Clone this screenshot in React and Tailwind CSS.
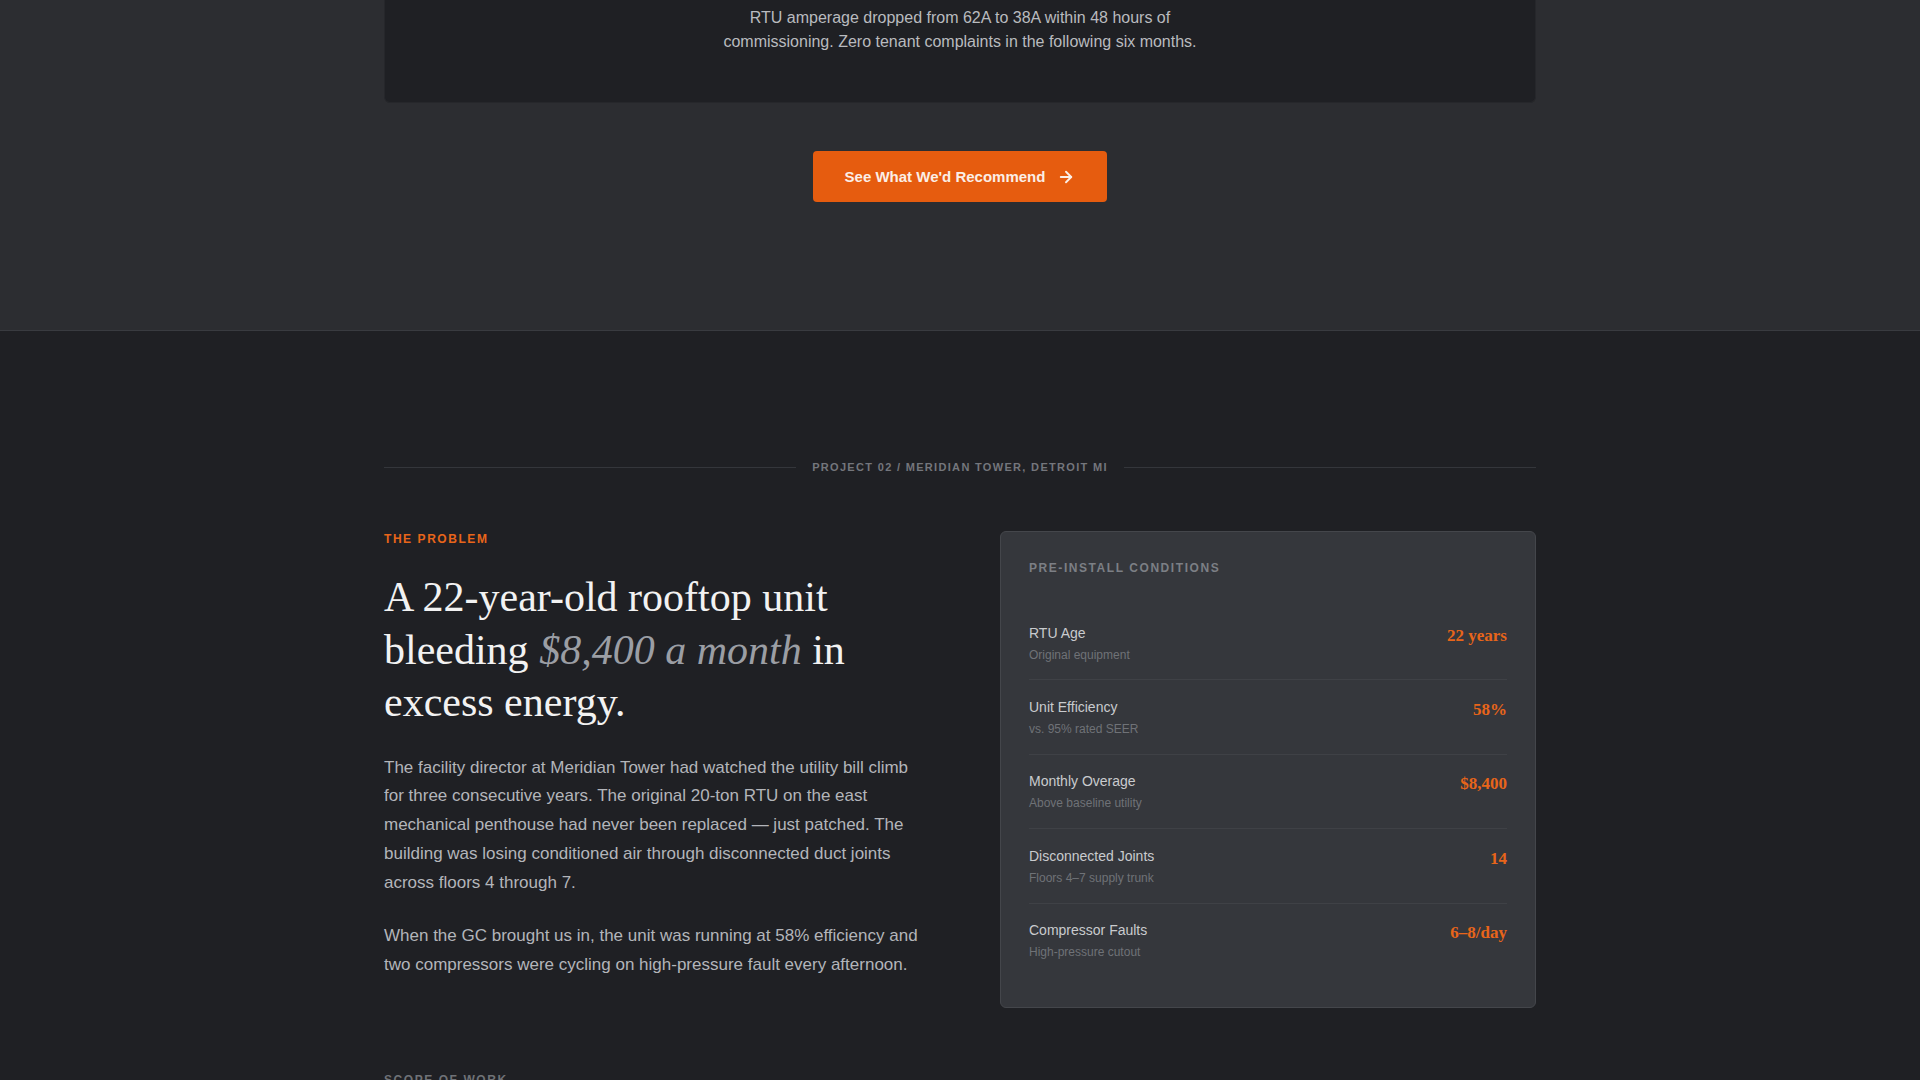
import React from "react";
import { ArrowRight } from "lucide-react";

const rows = [
  { label: "RTU Age", sub: "Original equipment", value: "22 years" },
  { label: "Unit Efficiency", sub: "vs. 95% rated SEER", value: "58%" },
  { label: "Monthly Overage", sub: "Above baseline utility", value: "$8,400" },
  { label: "Disconnected Joints", sub: "Floors 4–7 supply trunk", value: "14" },
  { label: "Compressor Faults", sub: "High-pressure cutout", value: "6–8/day" },
];

export default function App() {
  return (
    <div className="min-h-screen bg-[#1f2024] font-['Liberation_Sans',Arial,sans-serif] text-[#b6b8bc]">
      {/* Top section */}
      <section className="bg-[#2c2d31] pb-32">
        <div className="mx-auto w-[1152px]">
          <div className="rounded-b-md border-x border-b border-[#26272b] bg-[#1f2024] pt-[6px] pb-12">
            <p className="mx-auto max-w-lg text-center text-base leading-6 text-[#b9bbbf]">
              RTU amperage dropped from 62A to 38A within 48 hours of commissioning. Zero tenant complaints in the following six months.
            </p>
          </div>
          <div className="mt-12 flex justify-center">
            <button className="flex items-center gap-3 rounded-[4px] bg-[#e65c0f] px-8 py-[14px] text-[15px] font-bold leading-[23px] text-[#fbeee6]">
              <span>See What We'd Recommend</span>
              <ArrowRight size={18} strokeWidth={2.5} />
            </button>
          </div>
        </div>
      </section>

      {/* Project section */}
      <section className="border-t border-[#393b40] bg-[#1f2024] pt-32 pb-24">
        <div className="mx-auto w-[1152px]">
          <div className="flex items-center gap-4">
            <div className="h-px flex-1 bg-[#34363b]" />
            <span className="text-[11px] font-bold uppercase leading-4 tracking-[0.12em] text-[#74767c]">
              Project 02 / Meridian Tower, Detroit MI
            </span>
            <div className="h-px flex-1 bg-[#34363b]" />
          </div>

          <div className="mt-14 grid grid-cols-2 gap-20">
            <div>
              <div className="text-xs font-bold uppercase leading-4 tracking-[0.13em] text-[#e8651a]">
                The Problem
              </div>
              <h2 className="mt-6 font-['Liberation_Serif','Times_New_Roman',serif] text-[42px] font-normal leading-[1.25] text-[#f2f2f2]">
                A 22-year-old rooftop unit bleeding{" "}
                <em className="italic text-[#9b9ea4]">$8,400 a month</em> in excess energy.
              </h2>
              <p className="mt-[25px] text-[17px] leading-[1.7] text-[#b3b5ba]">
                The facility director at Meridian Tower had watched the utility bill climb for three consecutive years. The original 20-ton RTU on the east mechanical penthouse had never been replaced — just patched. The building was losing conditioned air through disconnected duct joints across floors 4 through 7.
              </p>
              <p className="mt-6 text-[17px] leading-[1.7] text-[#b3b5ba]">
                When the GC brought us in, the unit was running at 58% efficiency and two compressors were cycling on high-pressure fault every afternoon.
              </p>
            </div>

            <div className="self-start rounded-md border border-[#44464b] bg-[#35373c] px-7 pt-7 pb-[30px]">
              <div className="mb-[30px] text-xs font-bold uppercase leading-4 tracking-[0.13em] text-[#7c7f85]">
                Pre-Install Conditions
              </div>
              <div>
                {rows.map((r, i) => (
                  <div
                    key={r.label}
                    className={
                      "flex items-start justify-between py-[16.7px] " +
                      (i < rows.length - 1 ? "border-b border-[#3f4146]" : "")
                    }
                  >
                    <div>
                      <div className="text-sm leading-5 text-[#c9cbce]">{r.label}</div>
                      <div className="mt-1 text-xs leading-4 text-[#6f7277]">{r.sub}</div>
                    </div>
                    <div className="font-['Liberation_Serif','Times_New_Roman',serif] text-[17px] font-bold leading-[1.5] text-[#e8651a]">
                      {r.value}
                    </div>
                  </div>
                ))}
              </div>
            </div>
          </div>

          <div className="mt-16 text-xs font-bold uppercase leading-4 tracking-[0.13em] text-[#6f7277]">
            Scope of Work
          </div>
        </div>
      </section>
    </div>
  );
}
